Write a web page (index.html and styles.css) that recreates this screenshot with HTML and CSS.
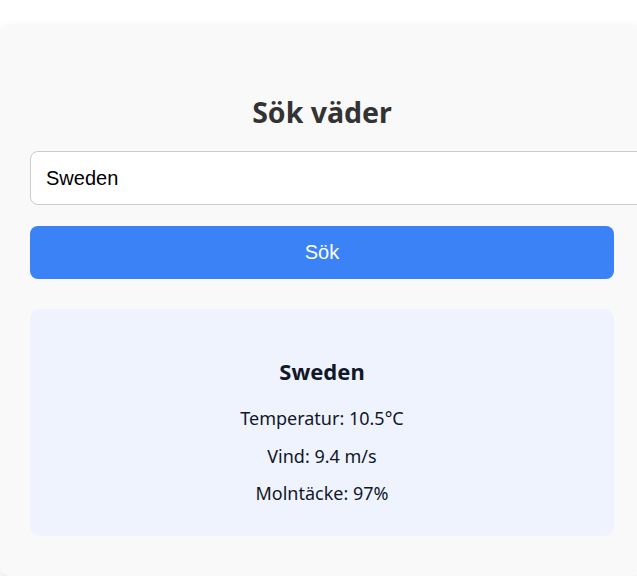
FILE: index.html
```html
<!DOCTYPE html>
<html lang="sv">
<head>
<meta charset="utf-8">
<title>Sök väder</title>
<link rel="stylesheet" href="styles.css">
</head>
<body>
<div class="card">
  <h1 class="title">Sök väder</h1>
  <input class="search" type="text" value="Sweden">
  <button class="btn">Sök</button>
  <div class="result">
    <h2 class="place">Sweden</h2>
    <p class="line">Temperatur: 10.5°C</p>
    <p class="line">Vind: 9.4 m/s</p>
    <p class="line">Molntäcke: 97%</p>
  </div>
</div>
</body>
</html>
```

FILE: styles.css
```css
html, body {
  margin: 0;
  padding: 0;
  background: #ffffff;
}
body {
  padding-top: 25px;
  font-family: "Noto Sans", "Open Sans", sans-serif;
  overflow: hidden;
}
.card {
  width: 584px;
  padding: 70px 30px 40px;
  background: #f9f9f9;
  border-radius: 10px;
  box-shadow: 0 4px 12px rgba(0, 0, 0, 0.1);
  display: flex;
  flex-direction: column;
}
.title {
  margin: 0 0 21px;
  font-size: 28.5px;
  line-height: 35px;
  font-weight: 700;
  color: #333333;
  text-align: center;
}
.search {
  box-sizing: content-box;
  width: 100%;
  margin: 0;
  padding: 15px;
  height: 22px;
  font-family: "Liberation Sans", Arial, sans-serif;
  font-size: 20px;
  color: #000000;
  background: #ffffff;
  border: 1px solid #cccccc;
  border-radius: 8px;
  outline: none;
}
.btn {
  margin: 21px 0 0;
  height: 53px;
  width: 100%;
  border: none;
  border-radius: 8px;
  background: #3b82f6;
  color: #ffffff;
  font-family: "Liberation Sans", Arial, sans-serif;
  font-size: 20px;
}
.result {
  margin-top: 30px;
  padding: 25px 20px 23px;
  background: #eff3fe;
  border-radius: 10px;
  text-align: center;
  color: #111827;
}
.place {
  margin: 22px 0 14px;
  font-size: 22px;
  line-height: 30px;
  font-weight: 700;
}
.line {
  margin: 0;
  font-size: 18px;
  line-height: 37.5px;
}
```
